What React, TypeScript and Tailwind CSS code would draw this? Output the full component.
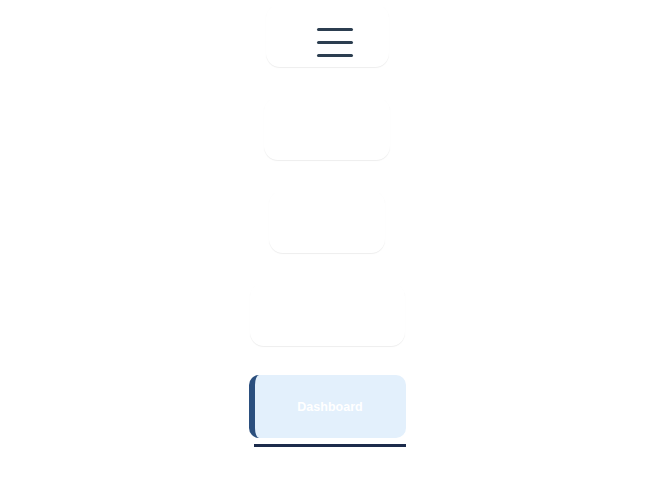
import React from "react";

const items = [
  { w: "w-[123px]", label: "" },
  { w: "w-[126px]", label: "" },
  { w: "w-[116px]", label: "" },
  { w: "w-[155px]", label: "" },
];

export default function App() {
  return (
    <div
      className="w-[645px] h-[487px] bg-white overflow-hidden"
      style={{ fontFamily: '"Liberation Sans", Arial, sans-serif' }}
    >
      <nav className="flex flex-col items-center gap-[30px] pt-[4px] pl-[9px]">
        {items.map((it, i) => (
          <div
            key={i}
            className={`${it.w} h-[63px] bg-white rounded-[14px] shadow-[0_1px_1px_rgba(0,0,0,0.07)] flex`}
          >
            {i === 0 && (
              <button className="flex flex-col gap-[10px] self-end mb-[10px] ml-[51px]">
                <span className="block w-[36px] h-[3px] rounded-full bg-[#2c3e50]" />
                <span className="block w-[36px] h-[3px] rounded-full bg-[#2c3e50]" />
                <span className="block w-[36px] h-[3px] rounded-full bg-[#2c3e50]" />
              </button>
            )}
            {i > 0 && (
              <span className="m-auto text-white text-[12px] font-bold">{it.label}</span>
            )}
          </div>
        ))}
        <div className="flex flex-col gap-[6px] -mt-[1px]">
          <div className="w-[157px] h-[63px] rounded-[10px] border-l-[6px] border-[#2b4f7e] bg-[#e3f0fc] flex items-center justify-center">
            <span className="text-white text-[12.5px] font-bold leading-none pt-[1px]">Dashboard</span>
          </div>
          <div className="ml-[5px] w-[152px] h-[3px] bg-[#1c2b4b]" />
        </div>
      </nav>
    </div>
  );
}
